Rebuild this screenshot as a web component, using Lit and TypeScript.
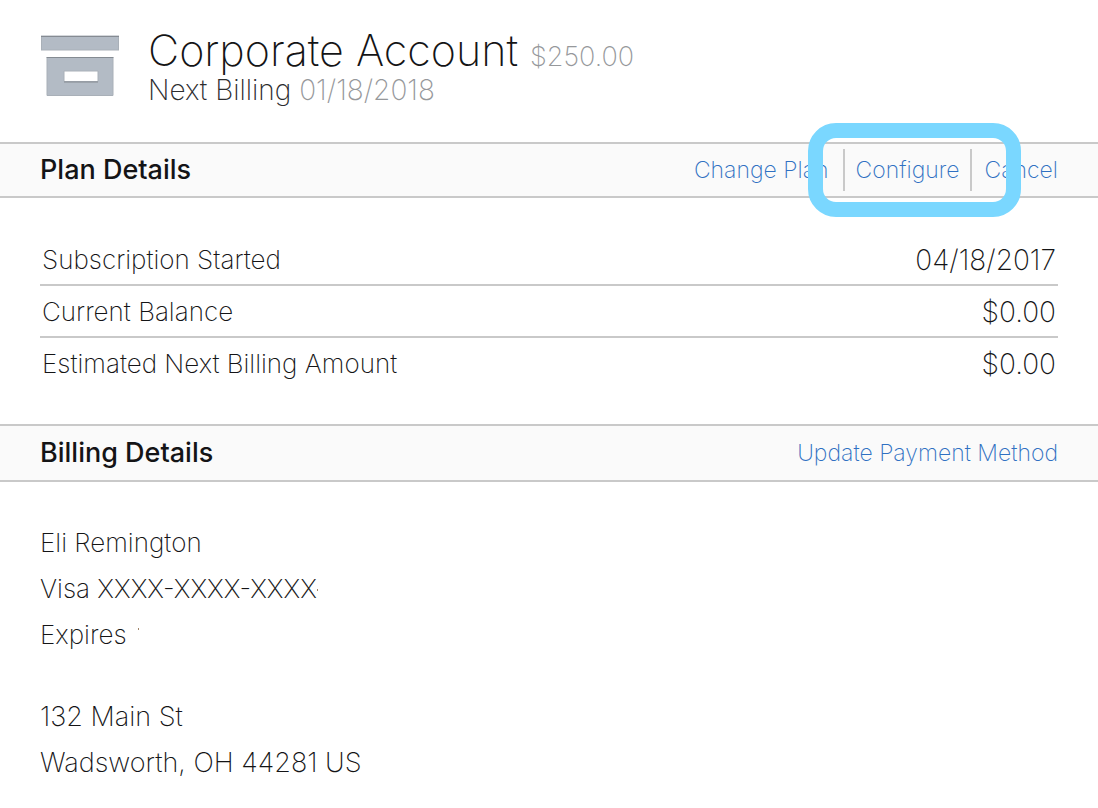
import { LitElement, html, css } from "lit";
import { customElement } from "lit/decorators.js";

const PLAN_ROWS = [
  { label: "Subscription Started", value: "04/18/2017" },
  { label: "Current Balance", value: "$0.00" },
  { label: "Estimated Next Billing Amount", value: "$0.00" },
];

@customElement("app-root")
export class AppRoot extends LitElement {
  static styles = css`
    :host {
      display: block;
      min-height: 100vh;
      box-sizing: border-box;
      background: #fff;
      color: #141416;
      font-family: Inter, "Liberation Sans", sans-serif;
      font-weight: 200;
      font-size: 26px;
    }
    .header {
      display: flex;
      align-items: flex-start;
      gap: 28px;
      padding: 24px 40px 38px;
    }
    .icon {
      display: block;
      flex: none;
      width: 80px;
      height: 62px;
      margin-top: 11px;
    }
    h1, h2, p, dl, dd, address {
      margin: 0;
      font-style: normal;
    }
    .title {
      font-size: 43px;
      font-weight: 200;
      line-height: 52px;
    }
    .muted {
      color: #96989b;
    }
    .price {
      font-size: 27px;
      line-height: 1;
    }
    .next {
      font-size: 28px;
      line-height: 28px;
      color: #2c2c2e;
    }
    .bar {
      display: flex;
      align-items: center;
      justify-content: space-between;
      box-sizing: border-box;
      min-height: 56px;
      padding: 0 40px;
      border-top: 2px solid #c9c9c9;
      border-bottom: 2px solid #c9c9c9;
      background: #fafafa;
    }
    .bar.tall {
      min-height: 58px;
    }
    .heading {
      font-size: 27px;
      font-weight: 500;
      line-height: 36px;
    }
    .links {
      display: flex;
      align-items: center;
      font-size: 23px;
    }
    .link {
      color: #2f70c2;
      text-decoration: none;
      line-height: 42px;
    }
    .spot {
      position: relative;
      margin: 0 12px 0 14px;
      padding: 0 11px;
      border: solid #c9c9c9;
      border-width: 0 2px;
    }
    .spot::after {
      content: "";
      position: absolute;
      inset: -26px -51px -26px -37px;
      border: 15px solid #7ad7ff;
      border-radius: 28px;
      pointer-events: none;
    }
    .rows {
      padding: 36px 40px;
    }
    .row {
      display: flex;
      justify-content: space-between;
      padding: 2px 2px 0;
      line-height: 48px;
      border-bottom: 2px solid #c9c9c9;
    }
    .row:last-child {
      border-bottom: 0;
    }
    .value {
      font-size: 28px;
    }
    .details {
      display: grid;
      gap: 36px;
      padding: 38px 40px 22px;
      line-height: 46px;
    }
    .address {
      font-size: 27px;
    }
    .speck {
      display: inline-block;
      width: 1px;
      height: 2px;
      vertical-align: 7px;
      background: #a08468;
    }
    .speck.apart {
      margin-left: 11px;
      vertical-align: 14px;
    }
  `;

  render() {
    return html`
      <main>
        <header class="header">
          <svg class="icon" viewBox="0 0 80 62" aria-hidden="true">
            <rect x="1.5" y="1" width="77" height="14" fill="#b3bbc5" stroke="#a9b0b8" />
            <path d="M1 1.5H79" stroke="#858b92" />
            <path d="M7 22.5H73V60.5H7Z M24 36V46.5H58V36Z" fill="#b3bbc5" fill-rule="evenodd" stroke="#a9b0b8" />
            <path d="M6.5 22.5H73.5M24 47H58" stroke="#858b92" />
          </svg>
          <div>
            <h1 class="title">Corporate Account <span class="price muted">$250.00</span></h1>
            <p class="next">Next Billing <span class="muted">01/18/2018</span></p>
          </div>
        </header>

        <section>
          <div class="bar">
            <h2 class="heading">Plan Details</h2>
            <nav class="links" aria-label="Plan actions">
              <a class="link" href="#change">Change Plan</a>
              <span class="spot"><a class="link" href="#configure">Configure</a></span>
              <a class="link" href="#cancel">Cancel</a>
            </nav>
          </div>
          <dl class="rows">
            ${PLAN_ROWS.map(
              (row) => html`<div class="row"><dt>${row.label}</dt><dd class="value">${row.value}</dd></div>`
            )}
          </dl>
        </section>

        <section>
          <div class="bar tall">
            <h2 class="heading">Billing Details</h2>
            <nav class="links" aria-label="Billing actions">
              <a class="link" href="#payment">Update Payment Method</a>
            </nav>
          </div>
          <div class="details">
            <div>
              <p>Eli Remington</p>
              <p>Visa XXXX-XXXX-XXXX<span class="speck"></span></p>
              <p>Expires<span class="speck apart"></span></p>
            </div>
            <address class="address">
              <p>132 Main St</p>
              <p>Wadsworth, OH 44281 US</p>
            </address>
          </div>
        </section>
      </main>
    `;
  }
}
